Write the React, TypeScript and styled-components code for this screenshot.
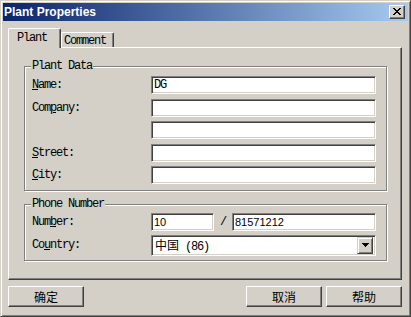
import styled, { createGlobalStyle } from "styled-components";

const GlobalStyle = createGlobalStyle`
	html, body {
		margin: 0;
		padding: 0;
		background: #d4d0c8;
	}
	body {
		font-family: "Liberation Mono", "Noto Sans CJK SC", monospace;
		font-size: 12px;
		color: #000;
	}
`;

const mono = `
	font-family: "Liberation Mono", "Noto Sans CJK SC", monospace;
	font-size: 12px;
	letter-spacing: -1.2px;
`;

const Window = styled.div`
	box-sizing: border-box;
	width: 411px;
	height: 317px;
	background: #d4d0c8;
	border: 1px solid;
	border-color: #d4d0c8 #404040 #404040 #d4d0c8;
	box-shadow: inset 1px 1px 0 #fff, inset -1px -1px 0 #808080;
	padding: 2px;
	display: flex;
	flex-direction: column;
`;

const TitleBar = styled.div`
	height: 18px;
	flex: none;
	display: flex;
	align-items: center;
	background: linear-gradient(to right, #0a246a, #a6caf0);
	padding-left: 1px;
`;

const TitleText = styled.span`
	flex: 1;
	color: #fff;
	font-family: "Liberation Sans", Arial, sans-serif;
	font-weight: bold;
	font-size: 12px;
`;

const CloseButton = styled.div`
	box-sizing: border-box;
	width: 16px;
	height: 14px;
	margin-right: 3px;
	background: #d4d0c8;
	border: 1px solid;
	border-color: #fff #404040 #404040 #fff;
	box-shadow: inset -1px -1px 0 #808080;
	display: flex;
	align-items: center;
	justify-content: center;
	padding: 0 1px 1px 0;
`;

const Body = styled.div`
	flex: 1;
	display: flex;
	flex-direction: column;
	padding: 7px 6px 0 5px;
`;

const TabStrip = styled.div`
	height: 19px;
	display: flex;
	align-items: flex-end;
`;

const Tab = styled.div<{ $active?: boolean }>`
	box-sizing: border-box;
	position: relative;
	z-index: 1;
	width: 53px;
	height: ${(p) => (p.$active ? "20px" : "15px")};
	margin-bottom: ${(p) => (p.$active ? "-1px" : "0")};
	background: #d4d0c8;
	border: 1px solid;
	border-bottom: none;
	border-color: #fff #404040 #404040 #fff;
	border-radius: 2px 2px 0 0;
	box-shadow: inset -1px 0 0 #808080;
	padding: ${(p) => (p.$active ? "3px 0 0 8px" : "2px 0 0 2px")};
	line-height: 12px;
	${mono}
`;

const Panel = styled.div`
	box-sizing: border-box;
	height: 233px;
	border: 1px solid;
	border-color: #fff #404040 #404040 #fff;
	box-shadow: inset -1px -1px 0 #808080;
	padding: 18px 0 0 15px;
`;

const GroupBox = styled.div<{ $top?: number }>`
	box-sizing: border-box;
	position: relative;
	width: 363px;
	margin-top: ${(p) => p.$top ?? 0}px;
	border: 1px solid #808080;
	box-shadow: inset 1px 1px 0 #fff, 1px 1px 0 #fff;
	padding: ${(p) => (p.$top ? "8px" : "9px")} 10px 6px 7px;
`;

const Legend = styled.span`
	position: absolute;
	top: -7px;
	left: 6px;
	padding: 0 1px;
	background: #d4d0c8;
	line-height: 12px;
	${mono}
`;

const Row = styled.div<{ $gap?: number }>`
	display: flex;
	align-items: center;
	height: ${(p) => p.$gap === undefined ? "18px" : "18px"};
	margin-top: ${(p) => p.$gap ?? 0}px;
`;

const Label = styled.label`
	width: 119px;
	flex: none;
	line-height: 12px;
	${mono}
	u {
		text-underline-offset: 1px;
	}
`;

const TextBox = styled.div<{ $width: number; $sans?: boolean }>`
	box-sizing: border-box;
	width: ${(p) => p.$width}px;
	height: 18px;
	flex: none;
	background: #fff;
	border: 1px solid;
	border-color: #808080 #fff #fff #808080;
	box-shadow: inset 1px 1px 0 #404040, inset -1px -1px 0 #d4d0c8;
	padding-left: 2px;
	display: flex;
	align-items: center;
	white-space: pre;
	${(p) =>
		p.$sans
			? `font-family: "Liberation Sans", Arial, sans-serif; font-size: 11px;`
			: mono}
`;

const Slash = styled.span`
	width: 18px;
	flex: none;
	text-align: center;
	${mono}
`;

const ComboBox = styled.div`
	box-sizing: border-box;
	width: 225px;
	height: 21px;
	background: #fff;
	border: 1px solid;
	border-color: #808080 #fff #fff #808080;
	box-shadow: inset 1px 1px 0 #404040, inset -1px -1px 0 #d4d0c8;
	padding: 1px 2px 1px 2px;
	display: flex;
	align-items: center;
`;

const ComboText = styled.span`
	flex: 1;
	padding-left: 1px;
	${mono}
`;

const Cjk = styled.span`
	font-family: "Noto Sans CJK SC", sans-serif;
	letter-spacing: 0;
`;

const DropButton = styled.div`
	box-sizing: border-box;
	width: 16px;
	height: 17px;
	flex: none;
	background: #d4d0c8;
	border: 1px solid;
	border-color: #d4d0c8 #404040 #404040 #d4d0c8;
	box-shadow: inset 1px 1px 0 #fff, inset -1px -1px 0 #808080;
	display: flex;
	align-items: center;
	justify-content: center;
`;

const Footer = styled.div`
	display: flex;
	gap: 4px;
	margin-top: 6px;
`;

const Spacer = styled.div`
	flex: 1;
`;

const PushButton = styled.button`
	box-sizing: border-box;
	width: 76px;
	height: 21px;
	margin: 0;
	padding: 0;
	background: #d4d0c8;
	border: 1px solid;
	border-color: #fff #404040 #404040 #fff;
	box-shadow: inset -1px -1px 0 #808080;
	font-family: "Noto Sans CJK SC", sans-serif;
	font-size: 12px;
	line-height: 12px;
	color: #000;
`;

function CloseGlyph() {
	return (
		<svg width="8" height="7" viewBox="0 0 8 7" shapeRendering="crispEdges">
			<path
				fill="#000"
				d="M0 0h2v1H0zM6 0h2v1H6zM1 1h2v1H1zM5 1h2v1H5zM2 2h4v1H2zM3 3h2v1H3zM2 4h4v1H2zM1 5h2v1H1zM5 5h2v1H5zM0 6h2v1H0zM6 6h2v1H6z"
			/>
		</svg>
	);
}

function ArrowGlyph() {
	return (
		<svg width="7" height="4" viewBox="0 0 7 4" shapeRendering="crispEdges">
			<path fill="#000" d="M0 0h7v1H0zM1 1h5v1H1zM2 2h3v1H2zM3 3h1v1H3z" />
		</svg>
	);
}

export default function App() {
	return (
		<>
			<GlobalStyle />
			<Window>
				<TitleBar>
					<TitleText>Plant Properties</TitleText>
					<CloseButton>
						<CloseGlyph />
					</CloseButton>
				</TitleBar>
				<Body>
					<TabStrip>
						<Tab $active>Plant</Tab>
						<Tab>Comment</Tab>
					</TabStrip>
					<Panel>
						<GroupBox>
							<Legend>Plant Data</Legend>
							<Row>
								<Label>
									<u>N</u>ame:
								</Label>
								<TextBox $width={225}>DG</TextBox>
							</Row>
							<Row $gap={5}>
								<Label>
									Com<u>p</u>any:
								</Label>
								<TextBox $width={225} />
							</Row>
							<Row $gap={4}>
								<Label />
								<TextBox $width={225} />
							</Row>
							<Row $gap={5}>
								<Label>
									<u>S</u>treet:
								</Label>
								<TextBox $width={225} />
							</Row>
							<Row $gap={4}>
								<Label>
									<u>C</u>ity:
								</Label>
								<TextBox $width={225} />
							</Row>
						</GroupBox>
						<GroupBox $top={13}>
							<Legend>Phone Number</Legend>
							<Row>
								<Label>
									Num<u>b</u>er:
								</Label>
								<TextBox $width={63} $sans>
									10
								</TextBox>
								<Slash>/</Slash>
								<TextBox $width={144} $sans>
									81571212
								</TextBox>
							</Row>
							<Row $gap={5}>
								<Label>
									Co<u>u</u>ntry:
								</Label>
								<ComboBox>
									<ComboText>
										<Cjk>中国</Cjk> (86)
									</ComboText>
									<DropButton>
										<ArrowGlyph />
									</DropButton>
								</ComboBox>
							</Row>
						</GroupBox>
					</Panel>
					<Footer>
						<PushButton>确定</PushButton>
						<Spacer />
						<PushButton>取消</PushButton>
						<PushButton>帮助</PushButton>
					</Footer>
				</Body>
			</Window>
		</>
	);
}
